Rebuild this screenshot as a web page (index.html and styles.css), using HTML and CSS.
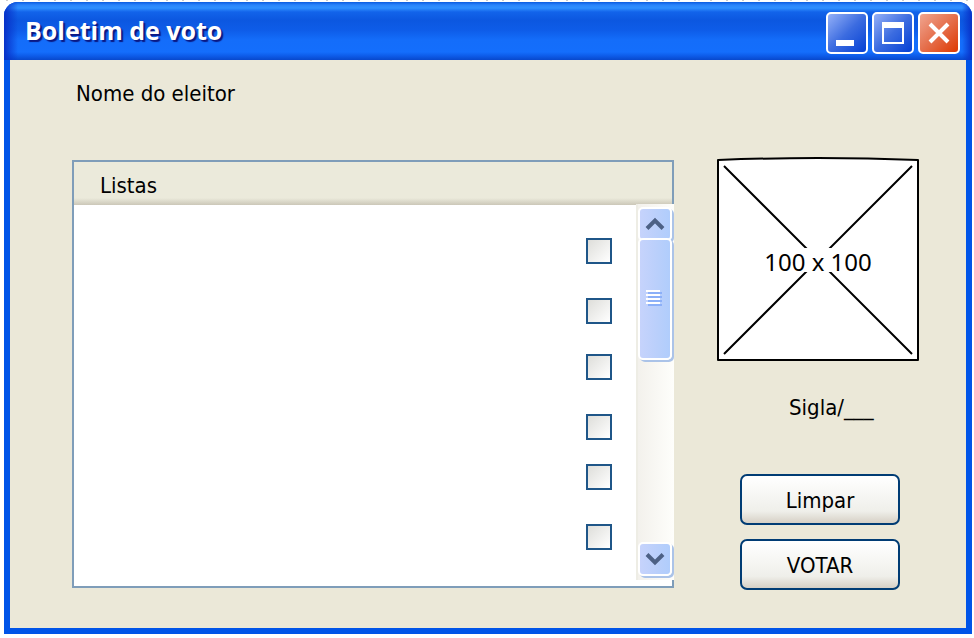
FILE: index.html
```html
<!DOCTYPE html>
<html lang="pt">
<head>
<meta charset="utf-8">
<title>Boletim de voto</title>
<link rel="stylesheet" href="styles.css">
</head>
<body>
<div class="window">
  <header class="titlebar">
    <h1 class="title">Boletim de voto</h1>
    <div class="controls">
      <button class="control" type="button" aria-label="Minimizar">
        <svg viewBox="0 0 38 38"><rect x="8" y="26" width="18" height="6" fill="#fff"/></svg>
      </button>
      <button class="control" type="button" aria-label="Maximizar">
        <svg viewBox="0 0 38 38"><path fill="#fff" fill-rule="evenodd" d="M8 8h22v22H8zM10 14v14h18V14z"/></svg>
      </button>
      <button class="control control-close" type="button" aria-label="Fechar">
        <svg viewBox="0 0 38 38"><path d="M10 10 28 28M28 10 10 28" stroke="#fff" stroke-width="4"/></svg>
      </button>
    </div>
  </header>
  <main class="content">
    <p class="voter">Nome do eleitor</p>
    <div class="columns">
      <section class="list">
        <h2 class="list-header">Listas</h2>
        <div class="list-body">
          <form class="checks">
            <div class="pair">
              <input class="check" type="checkbox" aria-label="Lista 1">
              <input class="check" type="checkbox" aria-label="Lista 2">
            </div>
            <div class="pair pair-middle">
              <input class="check" type="checkbox" aria-label="Lista 3">
              <input class="check" type="checkbox" aria-label="Lista 4">
            </div>
            <div class="pair">
              <input class="check" type="checkbox" aria-label="Lista 5">
              <input class="check" type="checkbox" aria-label="Lista 6">
            </div>
          </form>
          <div class="scrollbar">
            <button class="arrow arrow-up" type="button" aria-label="Subir">
              <svg viewBox="0 0 20 14"><path d="M2 11.500 10 3.500l8 8" fill="none" stroke="#4d6185" stroke-width="4"/></svg>
            </button>
            <div class="thumb">
              <svg class="grip" viewBox="0 0 16 16"><path d="M2 3h14M2 7h14M2 11h14M2 15h14" stroke="#8cb0f8" stroke-width="2"/><path d="M0 1h14M0 5h14M0 9h14M0 13h14" stroke="#fff" stroke-width="2"/></svg>
            </div>
            <button class="arrow arrow-down" type="button" aria-label="Descer">
              <svg viewBox="0 0 20 14"><path d="M2 2.500 10 10.500l8-8" fill="none" stroke="#4d6185" stroke-width="4"/></svg>
            </button>
          </div>
        </div>
      </section>
      <aside class="side">
        <svg class="placeholder" viewBox="0 0 202 204" role="img" aria-label="100 x 100">
          <path d="M1 3Q101-1 201 3V203H1Z" fill="#fff" stroke="#000" stroke-width="2" stroke-linejoin="round"/>
          <path d="M7 9 195 197M195 9 7 197" stroke="#000" stroke-width="2"/>
          <rect x="44" y="91" width="114" height="24" fill="#fff"/>
          <text class="size" x="101" y="114" text-anchor="middle">100 x 100</text>
        </svg>
        <p class="party">Sigla/___</p>
        <div class="actions">
          <button class="action" type="reset">Limpar</button>
          <button class="action" type="submit">VOTAR</button>
        </div>
      </aside>
    </div>
  </main>
</div>
</body>
</html>
```
FILE: styles.css
```css
* {
  box-sizing: border-box;
}

body {
  margin: 0;
  padding: 2px 2px 4px 4px;
  min-height: 100vh;
  display: flex;
  background: repeating-linear-gradient(to right, #fff 0 6px, #ccc 6px 8px, #fff 8px 16px) top / 100% 1px no-repeat #fff;
  color: #000;
  font: 22px/28px "DejaVu Sans Condensed", "Noto Sans", sans-serif;
}

h1,
h2,
p {
  margin: 0;
  font-weight: normal;
}

button {
  padding: 0;
  font: inherit;
  color: inherit;
}

svg {
  display: block;
}

.window {
  flex: 1;
  display: flex;
  flex-direction: column;
  border-radius: 14px 14px 0 0;
  overflow: hidden;
  background: #0054e8;
}

.titlebar {
  height: 58px;
  display: flex;
  align-items: center;
  justify-content: space-between;
  padding: 4px 12px 0 21px;
  background:
    linear-gradient(to right, #0831c8, #0831c800 14px),
    linear-gradient(to left, #0831c8, #0831c800 10px),
    linear-gradient(#0b5be0, #2b84fb 3px, #3090ff 6px, #1263ea 10px, #0c57e0 18px, #0e5ce8 28px, #146dfa 38px, #146efc 50px, #0d5be8 54px, #0848cc);
}

.title {
  padding-bottom: 6px;
  color: #fff;
  font: bold 25px/32px "Open Sans", "Noto Sans", sans-serif;
  text-shadow: 2px 2px 1px #0a1883;
}

.controls {
  display: flex;
  gap: 4px;
}

.control {
  width: 42px;
  height: 42px;
  border: 2px solid #fff;
  border-radius: 5px;
  background: linear-gradient(135deg, #94b0f8, #3c6ce0 50%, #0440d4);
}

.control-close {
  background: linear-gradient(135deg, #f0a590, #e56f4c 50%, #de3800);
}

.content {
  flex: 1;
  margin: 0 6px 6px;
  padding: 20px 47px 30px 62px;
  background: #ebe8d8;
}

.voter {
  padding-left: 4px;
}

.columns {
  display: flex;
  align-items: flex-start;
  gap: 43px;
  margin-top: 49px;
}

.list {
  flex: 1;
  margin-top: 3px;
  border: 2px solid #7f9db9;
  background: #fff;
}

.list-header {
  height: 43px;
  padding: 10px 26px 0;
  font-size: 22px;
  background: linear-gradient(#ebeadb 36px, #cbc7b8);
}

.list-body {
  display: flex;
  padding-bottom: 6px;
}

.checks {
  flex: 1;
  display: flex;
  flex-direction: column;
  align-items: flex-end;
  padding: 33px 24px 0 0;
}

.pair {
  display: grid;
  gap: 34px;
}

.pair-middle {
  margin: 30px 0 24px;
}

.check {
  appearance: none;
  width: 26px;
  height: 26px;
  margin: 0;
  border: 2px solid #1f5688;
  background: linear-gradient(135deg, #dededa, #fff);
}

.scrollbar {
  width: 38px;
  height: 376px;
  margin: -1px -2px 0 0;
  display: flex;
  flex-direction: column;
  align-items: flex-start;
  padding: 3px 0 4px;
  border-left: 2px solid #eeede5;
  background: linear-gradient(to right, #f3f1ec, #fefefb);
}

.arrow,
.thumb {
  display: grid;
  place-items: center;
  width: 34px;
  border: 2px solid #fff;
  border-radius: 5px;
  background: linear-gradient(to right, #c6d3fc, #b9cffb 60%, #b0cdfc);
  box-shadow: 2px 2px 0 #abc3e8;
}

.arrow {
  height: 34px;
  flex: none;
}

.arrow svg {
  width: 20px;
  height: 14px;
}

.arrow-up {
  margin-bottom: -3px;
}

.arrow-down {
  margin-top: auto;
}

.thumb {
  height: 122px;
  flex: none;
}

.grip {
  width: 16px;
  height: 16px;
  margin: 0 2px 2px 0;
}

.side {
  width: 202px;
  flex: none;
}

.placeholder {
  width: 100%;
}

.size {
  font: 24px "Noto Sans", sans-serif;
}

.party {
  padding: 33px 0 0 72px;
}

.actions {
  display: grid;
  gap: 14px;
  padding: 52px 19px 0 23px;
}

.action {
  height: 51px;
  padding-top: 2px;
  border: 2px solid #003c74;
  border-radius: 7px;
  background: linear-gradient(#fff, #efefea 75%, #d6d0c5);
}
```
